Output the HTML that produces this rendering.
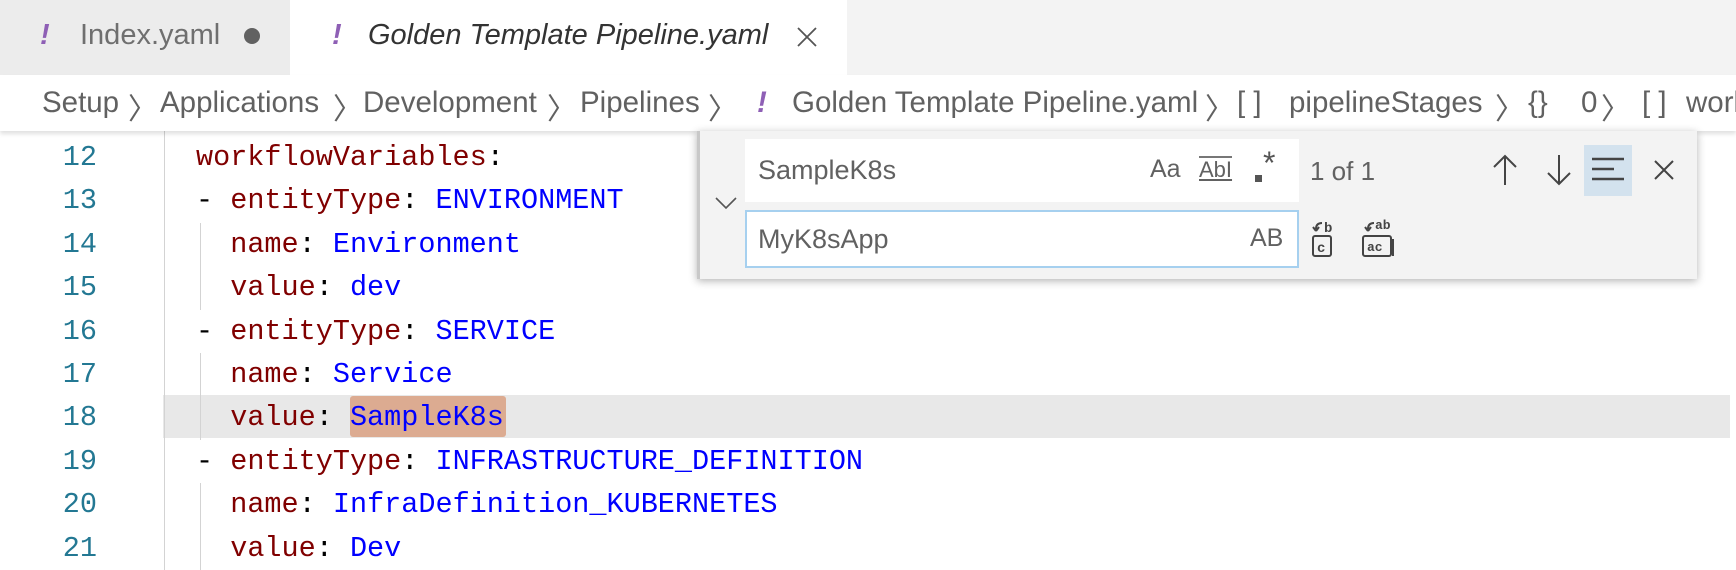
<!DOCTYPE html>
<html><head><meta charset="utf-8"><style>
body{margin:0;width:1736px;height:570px;overflow:hidden;background:#fff;font-family:"Liberation Sans",sans-serif;position:relative}
.a{position:absolute}
.tabs{left:0;top:0;width:1736px;height:75px;background:#f3f3f3}
.t1{left:0;top:0;width:290px;height:75px;background:#ececec}
.t2{left:290px;top:0;width:557px;height:75px;background:#fff}
.tx{font-size:29px;top:19px;white-space:nowrap}
.bang{color:#8e5fb5;font-style:italic;font-weight:bold}
.bc{left:0;top:75px;width:1736px;height:56px;background:#fff;box-shadow:0 3px 4px rgba(0,0,0,.12);z-index:2;font-size:29.5px;color:#616161;overflow:hidden}
.bc span{position:absolute;top:11px;white-space:nowrap}
.code{font-family:"Liberation Mono",monospace;font-size:28.5px;white-space:pre}
.ln{color:#237893;width:97px;text-align:right;left:0;top:0}
.k{color:#800000}.v{color:#0000ff}
.fw{left:697px;top:131px;width:1000px;height:148px;background:#f3f3f3;box-shadow:0 2px 8px rgba(0,0,0,.3);border-left:3px solid #c8c8c8;z-index:3;box-sizing:border-box}
.in{background:#fff;box-sizing:border-box;font-size:27px;color:#616161}
</style></head><body>
<div class="a tabs"></div>
<div class="a t1"><span class="a tx" style="left:40px"><span class="bang">!</span></span><span class="a tx" style="left:80px;color:#6f6f6f">Index.yaml</span><span class="a" style="left:244px;top:28px;width:16px;height:16px;border-radius:50%;background:#616161"></span></div>
<div class="a t2"><span class="a tx" style="left:42px"><span class="bang">!</span></span><span class="a tx" style="left:78px;font-style:italic;color:#333">Golden Template Pipeline.yaml</span>
<svg class="a" style="left:506px;top:26px" width="22" height="22"><path d="M2 2l18 18M20 2L2 20" stroke="#555" stroke-width="1.8"/></svg></div>
<div class="a bc">
<span style="left:42px">Setup</span><span style="left:128px">〉</span>
<span style="left:160px">Applications</span><span style="left:333px">〉</span>
<span style="left:363px">Development</span><span style="left:547px">〉</span>
<span style="left:580px">Pipelines</span><span style="left:708px">〉</span>
<span style="left:757px" class="bang">!</span>
<span style="left:792px">Golden Template Pipeline.yaml</span><span style="left:1205px">〉</span>
<span style="left:1237px">[ ]</span><span style="left:1289px">pipelineStages</span><span style="left:1495px">〉</span>
<span style="left:1528px">{}</span><span style="left:1581px">0</span><span style="left:1601px">〉</span>
<span style="left:1642px">[ ]</span><span style="left:1686px">workflowVariables</span>
</div>

<div class="a" style="left:163px;top:395px;width:1567px;height:43px;background:#e8e8e8"></div>
<div class="a" style="left:350px;top:396px;width:156px;height:41px;background:#dcab91;border-radius:3px"></div>
<div class="a" style="left:164px;top:131px;width:1px;height:439px;background:#d3d3d3"></div>
<div class="a" style="left:200px;top:223px;width:1px;height:87px;background:#d3d3d3"></div>
<div class="a" style="left:200px;top:353px;width:1px;height:87px;background:#d3d3d3"></div>
<div class="a" style="left:200px;top:483px;width:1px;height:87px;background:#d3d3d3"></div>

<div class="a code" style="top:136px;line-height:43.4px;left:0;width:1736px"><div class="a ln">12
13
14
15
16
17
18
19
20
21</div><div class="a" style="left:196px;top:0"><span class="k">workflowVariables</span>:
- <span class="k">entityType</span>: <span class="v">ENVIRONMENT</span>
  <span class="k">name</span>: <span class="v">Environment</span>
  <span class="k">value</span>: <span class="v">dev</span>
- <span class="k">entityType</span>: <span class="v">SERVICE</span>
  <span class="k">name</span>: <span class="v">Service</span>
  <span class="k">value</span>: <span class="v">SampleK8s</span>
- <span class="k">entityType</span>: <span class="v">INFRASTRUCTURE_DEFINITION</span>
  <span class="k">name</span>: <span class="v">InfraDefinition_KUBERNETES</span>
  <span class="k">value</span>: <span class="v">Dev</span></div></div>

<div class="a fw">
<svg class="a" style="left:14px;top:64px" width="24" height="16"><path d="M2 3l10 10 10-10" fill="none" stroke="#555" stroke-width="1.6"/></svg>
<div class="a in" style="left:45px;top:8px;width:554px;height:63px"><span class="a" style="left:13px;top:16px">SampleK8s</span>
<span class="a" style="left:405px;top:16px;font-size:25px">Aa</span>
<span class="a" style="left:454px;top:17px;font-size:22px;text-decoration:underline;border-top:2px solid #777;line-height:24px">AbI</span>
<span class="a" style="left:510px;top:36px;width:7px;height:7px;background:#555"></span>
<span class="a" style="left:518px;top:6px;font-size:32px;color:#555">*</span></div>
<span class="a" style="left:610px;top:25px;font-size:26px;color:#616161">1 of 1</span>
<svg class="a" style="left:790px;top:22px" width="30" height="34"><path d="M15 32V3M4 14L15 3l11 11" fill="none" stroke="#444" stroke-width="2"/></svg>
<svg class="a" style="left:844px;top:22px" width="30" height="34"><path d="M15 2v29M4 20l11 11 11-11" fill="none" stroke="#444" stroke-width="2"/></svg>
<div class="a" style="left:884px;top:14px;width:48px;height:51px;background:#d3e2ee"></div>
<svg class="a" style="left:890px;top:24px" width="36" height="30"><path d="M2 4h32M2 14h22M2 24h32" stroke="#444" stroke-width="2.4"/></svg>
<svg class="a" style="left:952px;top:27px" width="24" height="24"><path d="M3 3l18 18M21 3L3 21" stroke="#444" stroke-width="2"/></svg>
<div class="a in" style="left:45px;top:79px;width:554px;height:58px;border:2px solid #a6d0ef"><span class="a" style="left:11px;top:12px">MyK8sApp</span><span class="a" style="left:503px;top:12px;font-size:25px">AB</span></div>
<svg class="a" style="left:610px;top:88px" width="28" height="40"><path d="M6 10c0-4 2-6 6-6M6 12l-3-4M6 12l3-4" fill="none" stroke="#444" stroke-width="2"/><text x="14" y="13" font-size="14" font-weight="bold" fill="#444" font-family="Liberation Mono">b</text><rect x="3" y="17" width="18" height="20" rx="2" fill="none" stroke="#444" stroke-width="2"/><text x="7" y="33" font-size="14" font-weight="bold" fill="#444" font-family="Liberation Mono">c</text></svg>
<svg class="a" style="left:660px;top:86px" width="38" height="42"><path d="M8 12c0-4 2-6 6-6M8 14l-3-4M8 14l3-4" fill="none" stroke="#444" stroke-width="2"/><text x="15" y="12" font-size="13" font-weight="bold" fill="#444" font-family="Liberation Mono">ab</text><rect x="3" y="19" width="28" height="20" rx="2" fill="none" stroke="#444" stroke-width="2"/><path d="M33 22v17" stroke="#444" stroke-width="2"/><text x="7" y="34" font-size="13" font-weight="bold" fill="#444" font-family="Liberation Mono">ac</text></svg>
</div>
</body></html>
